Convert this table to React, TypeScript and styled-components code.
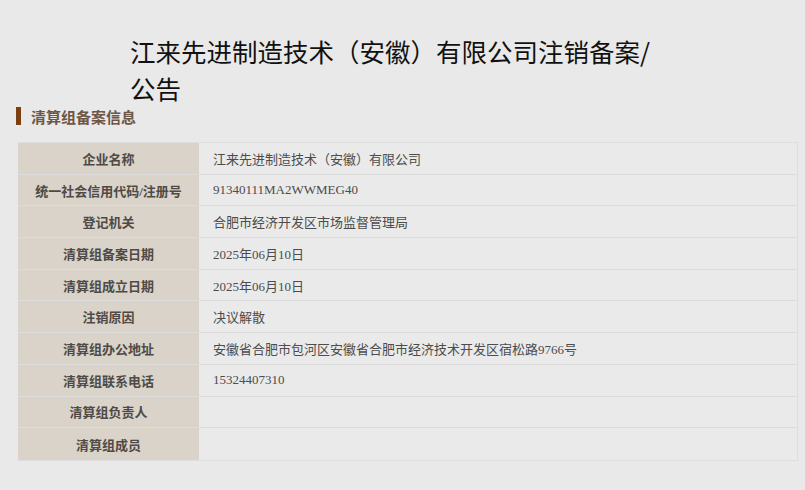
import { FC } from "react"
import styled, { createGlobalStyle } from "styled-components"

const GlobalStyle = createGlobalStyle`
  html, body {
    margin: 0;
    padding: 0;
    background-color: #e9e9e9;
  }
`

const Page = styled.div`
  width: 805px;
  height: 490px;
  overflow: hidden;
  background-color: #e9e9e9;
  font-family: "Liberation Serif", "Noto Sans CJK SC", serif;
`

const Title = styled.h1`
  margin: 0;
  padding: 32px 0 0 130px;
  width: 535px;
  font-family: "Noto Sans CJK SC", sans-serif;
  font-size: 25.5px;
  font-weight: 400;
  line-height: 37px;
  color: #111;
`

const SectionHeader = styled.div`
  display: flex;
  align-items: center;
  gap: 10px;
  margin: 0 0 0 16px;
  height: 20px;
`

const SectionBar = styled.span`
  width: 5px;
  height: 18px;
  background-color: #7b3f12;
`

const SectionTitle = styled.span`
  font-size: 15px;
  font-weight: 700;
  color: #6e5646;
`

const Table = styled.div`
  margin: 16px 0 0 18px;
  width: 780px;
  display: grid;
  grid-template-columns: 181px 1fr;
  border: 1px solid #dedede;
  border-left: none;
  box-sizing: border-box;
`

const Cell = styled.div<{ $label?: boolean; $last?: boolean }>`
  height: 31.7px;
  box-sizing: border-box;
  display: flex;
  align-items: center;
  justify-content: ${(p) => (p.$label ? "center" : "flex-start")};
  padding-left: ${(p) => (p.$label ? "0" : "14px")};
  background-color: ${(p) => (p.$label ? "#d9d3ca" : "#eaeaea")};
  border-bottom: ${(p) => (p.$last ? "none" : "1px solid #dcdcdc")};
  font-size: 13px;
  font-weight: ${(p) => (p.$label ? 700 : 400)};
  color: ${(p) => (p.$label ? "#4f4a45" : "#4c4c4c")};
`

type Row = { label: string; value: string }

const rows: Row[] = [
  { label: "企业名称", value: "江来先进制造技术（安徽）有限公司" },
  { label: "统一社会信用代码/注册号", value: "91340111MA2WWMEG40" },
  { label: "登记机关", value: "合肥市经济开发区市场监督管理局" },
  { label: "清算组备案日期", value: "2025年06月10日" },
  { label: "清算组成立日期", value: "2025年06月10日" },
  { label: "注销原因", value: "决议解散" },
  { label: "清算组办公地址", value: "安徽省合肥市包河区安徽省合肥市经济技术开发区宿松路9766号" },
  { label: "清算组联系电话", value: "15324407310" },
  { label: "清算组负责人", value: "" },
  { label: "清算组成员", value: "" },
]

const App: FC = () => {
  return (
    <Page>
      <GlobalStyle />
      <Title>江来先进制造技术（安徽）有限公司注销备案/公告</Title>
      <SectionHeader>
        <SectionBar />
        <SectionTitle>清算组备案信息</SectionTitle>
      </SectionHeader>
      <Table>
        {rows.map((row, i) => {
          const last = i === rows.length - 1
          return [
            <Cell key={`l${i}`} $label $last={last}>{row.label}</Cell>,
            <Cell key={`v${i}`} $last={last}>{row.value}</Cell>,
          ]
        })}
      </Table>
    </Page>
  )
}

export default App
